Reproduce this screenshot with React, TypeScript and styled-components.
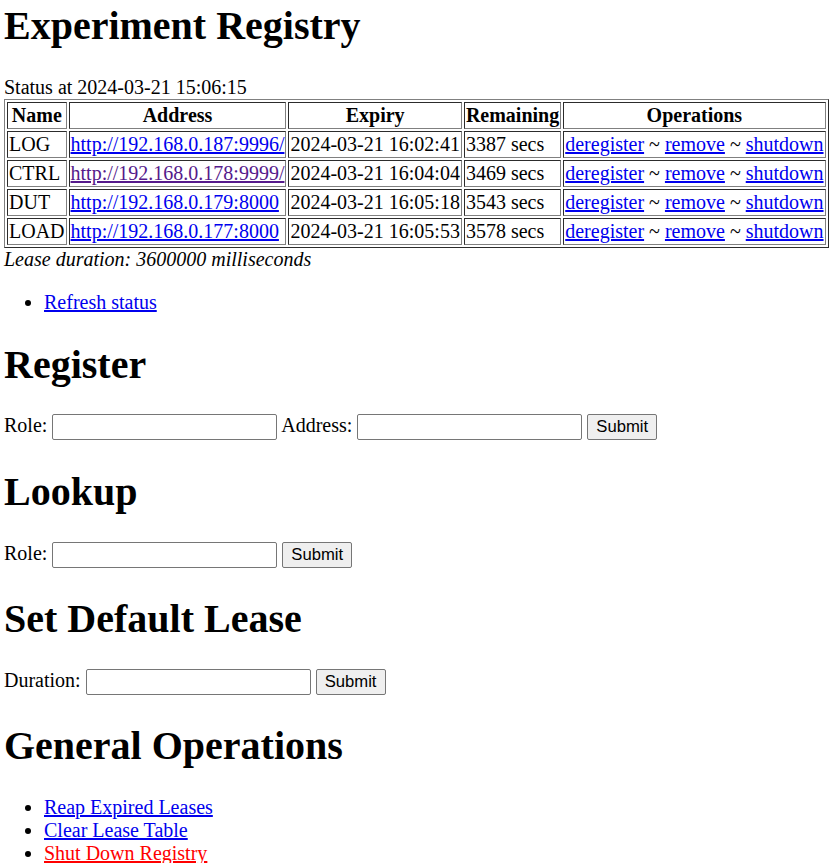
import React from "react";
import styled, { createGlobalStyle } from "styled-components";

const GlobalStyle = createGlobalStyle`
  html { font-size: 20px; }
  body {
    margin: 0;
    padding: 2px 4px 0 4px;
    font-family: "Liberation Serif", "Times New Roman", serif;
    font-size: 20px;
    line-height: normal;
    color: #000;
    background: #fff;
  }
`;

const Page = styled.div`
  display: block;
`;

const Heading = styled.h1<{ $first?: boolean }>`
  font-size: 40px;
  font-weight: bold;
  margin: ${(p) => (p.$first ? "0 0 26.8px 0" : "26.8px 0")};
`;

const StatusLine = styled.div`
  display: block;
`;

const RegistryTable = styled.table`
  border: 1px outset gray;
  border-spacing: 2px;
  border-collapse: separate;
`;

const HeadCell = styled.th`
  border: 1px inset gray;
  padding: 1px;
  font-weight: bold;
  text-align: center;
`;

const Cell = styled.td`
  border: 1px inset gray;
  padding: 1px;
  text-align: left;
  white-space: nowrap;
`;

const Link = styled.a<{ $visited?: boolean; $danger?: boolean }>`
  color: ${(p) => (p.$danger ? "#ff0000" : p.$visited ? "#551a8b" : "#0000ee")};
  text-decoration: underline;
  cursor: pointer;
`;

const LeaseNote = styled.div`
  font-style: italic;
`;

const LinkList = styled.ul`
  margin: 20px 0;
  padding-left: 40px;
  list-style: disc;
`;

const Form = styled.form`
  margin: 0 0 20px 0;
  min-height: 26.7px;
`;

const TextInput = styled.input`
  box-sizing: border-box;
  width: 225px;
  height: 26px;
  margin: 0;
  padding: 1px 2px;
  border: 1px solid #767676;
  border-radius: 2px;
  font-family: "Liberation Sans", Arial, sans-serif;
  font-size: 16.67px;
  background: #fff;
`;

const SubmitButton = styled.button`
  box-sizing: border-box;
  height: 26px;
  margin: 0;
  padding: 0 8px;
  border: 1px solid #767676;
  border-radius: 2px;
  background: #efefef;
  color: #000;
  font-family: "Liberation Sans", Arial, sans-serif;
  font-size: 16.67px;
`;

const entries = [
  { name: "LOG", address: "http://192.168.0.187:9996/", expiry: "2024-03-21 16:02:41", remaining: 3387, visited: false },
  { name: "CTRL", address: "http://192.168.0.178:9999/", expiry: "2024-03-21 16:04:04", remaining: 3469, visited: true },
  { name: "DUT", address: "http://192.168.0.179:8000", expiry: "2024-03-21 16:05:18", remaining: 3543, visited: false },
  { name: "LOAD", address: "http://192.168.0.177:8000", expiry: "2024-03-21 16:05:53", remaining: 3578, visited: false },
];

const noop = (e: React.SyntheticEvent) => e.preventDefault();

export default function App() {
  return (
    <Page>
      <GlobalStyle />
      <Heading $first>Experiment Registry</Heading>
      <StatusLine>Status at 2024-03-21 15:06:15</StatusLine>
      <RegistryTable>
        <tbody>
          <tr>
            <HeadCell>Name</HeadCell>
            <HeadCell>Address</HeadCell>
            <HeadCell>Expiry</HeadCell>
            <HeadCell>Remaining</HeadCell>
            <HeadCell>Operations</HeadCell>
          </tr>
          {entries.map((e) => (
            <tr key={e.name}>
              <Cell>{e.name}</Cell>
              <Cell>
                <Link href="#" onClick={noop} $visited={e.visited}>
                  {e.address}
                </Link>
              </Cell>
              <Cell>{e.expiry}</Cell>
              <Cell>{e.remaining} secs</Cell>
              <Cell>
                <Link href="#" onClick={noop}>deregister</Link> ~{" "}
                <Link href="#" onClick={noop}>remove</Link> ~{" "}
                <Link href="#" onClick={noop}>shutdown</Link>
              </Cell>
            </tr>
          ))}
        </tbody>
      </RegistryTable>
      <LeaseNote>Lease duration: 3600000 milliseconds</LeaseNote>
      <LinkList>
        <li>
          <Link href="#" onClick={noop}>Refresh status</Link>
        </li>
      </LinkList>

      <Heading>Register</Heading>
      <Form onSubmit={noop}>
        Role: <TextInput type="text" /> Address: <TextInput type="text" />{" "}
        <SubmitButton type="submit">Submit</SubmitButton>
      </Form>

      <Heading>Lookup</Heading>
      <Form onSubmit={noop}>
        Role: <TextInput type="text" /> <SubmitButton type="submit">Submit</SubmitButton>
      </Form>

      <Heading>Set Default Lease</Heading>
      <Form onSubmit={noop}>
        Duration: <TextInput type="text" /> <SubmitButton type="submit">Submit</SubmitButton>
      </Form>

      <Heading>General Operations</Heading>
      <LinkList>
        <li>
          <Link href="#" onClick={noop}>Reap Expired Leases</Link>
        </li>
        <li>
          <Link href="#" onClick={noop}>Clear Lease Table</Link>
        </li>
        <li>
          <Link href="#" onClick={noop} $danger>Shut Down Registry</Link>
        </li>
      </LinkList>
    </Page>
  );
}
